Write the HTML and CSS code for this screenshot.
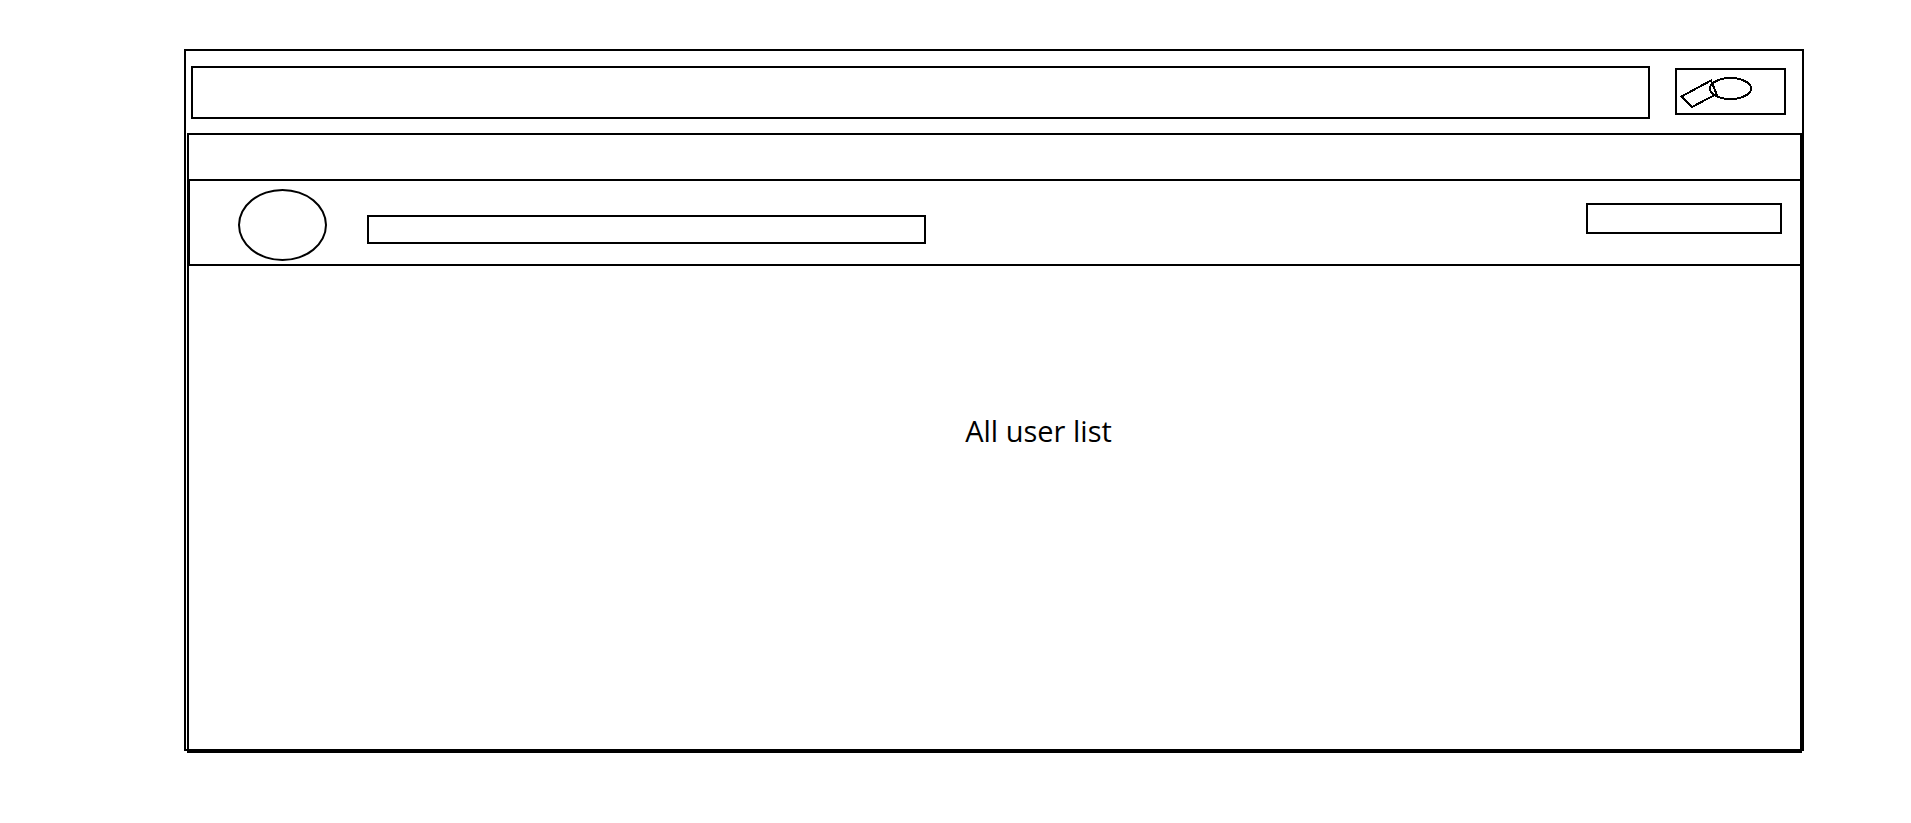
FILE: index.html
```html
<!DOCTYPE html>
<html lang="en">
<head>
<meta charset="utf-8">
<title>All user list</title>
<link rel="stylesheet" href="styles.css">
</head>
<body>
<main class="frame">
  <form class="search">
    <input class="search-input" type="text" aria-label="Search">
    <button class="search-button" type="button" aria-label="Search">
      <svg class="search-icon" viewBox="0 0 107 43" width="107" height="43" fill="none" stroke="#000" stroke-width="2" shape-rendering="crispEdges" aria-hidden="true">
        <ellipse cx="53.5" cy="18.5" rx="20.5" ry="10.5"/>
        <path d="M4.500 26.500L34 10.500L39.500 24L15 37Z"/>
      </svg>
    </button>
  </form>
  <section class="panel">
    <header class="panel-bar"></header>
    <article class="user">
      <div class="avatar"></div>
      <div class="user-name"></div>
      <button class="user-action" type="button" aria-label="Action"></button>
    </article>
    <div class="list">
      <h1 class="list-title">All user list</h1>
    </div>
  </section>
</main>
</body>
</html>
```
FILE: styles.css
```css
* {
  box-sizing: border-box;
}

body {
  margin: 0;
  padding: 49px 107px 70px 184px;
  background: #fff;
  color: #000;
  font-family: "Open Sans", "Noto Sans", sans-serif;
}

.frame {
  border: 2px solid #000;
}

.search {
  display: flex;
  align-items: flex-start;
  gap: 25px;
  padding: 15px 16px 14px 5px;
}

.search-input {
  flex: 1;
  min-width: 0;
  height: 53px;
  padding: 0 12px;
  border: 2px solid #000;
  border-radius: 0;
  background: #fff;
  font: inherit;
}

.search-button {
  flex: none;
  margin: 2px 0 0;
  padding: 0;
  border: 2px solid #000;
  border-radius: 0;
  background: #fff;
}

.search-icon {
  display: block;
}

.panel {
  margin: 0 0 -4px 1px;
  border: 2px solid #000;
}

.panel-bar {
  height: 44px;
}

.user {
  display: flex;
  align-items: flex-start;
  margin: 0 -2px 0 -1px;
  padding: 8px 18px 3px 48px;
  border: 2px solid #000;
}

.avatar {
  flex: none;
  width: 89px;
  height: 72px;
  border: 2px solid #000;
  border-radius: 50%;
}

.user-name {
  flex: 0 1 559px;
  height: 29px;
  margin: 26px 40px 0;
  border: 2px solid #000;
}

.user-action {
  flex: none;
  width: 196px;
  height: 31px;
  margin: 14px 0 0 auto;
  padding: 0;
  border: 2px solid #000;
  border-radius: 0;
  background: #fff;
}

.list {
  min-height: 485px;
  padding: 145px 0 0 88px;
}

.list-title {
  margin: 0;
  font-size: 29px;
  font-weight: 400;
  line-height: 40px;
  text-align: center;
}
```
